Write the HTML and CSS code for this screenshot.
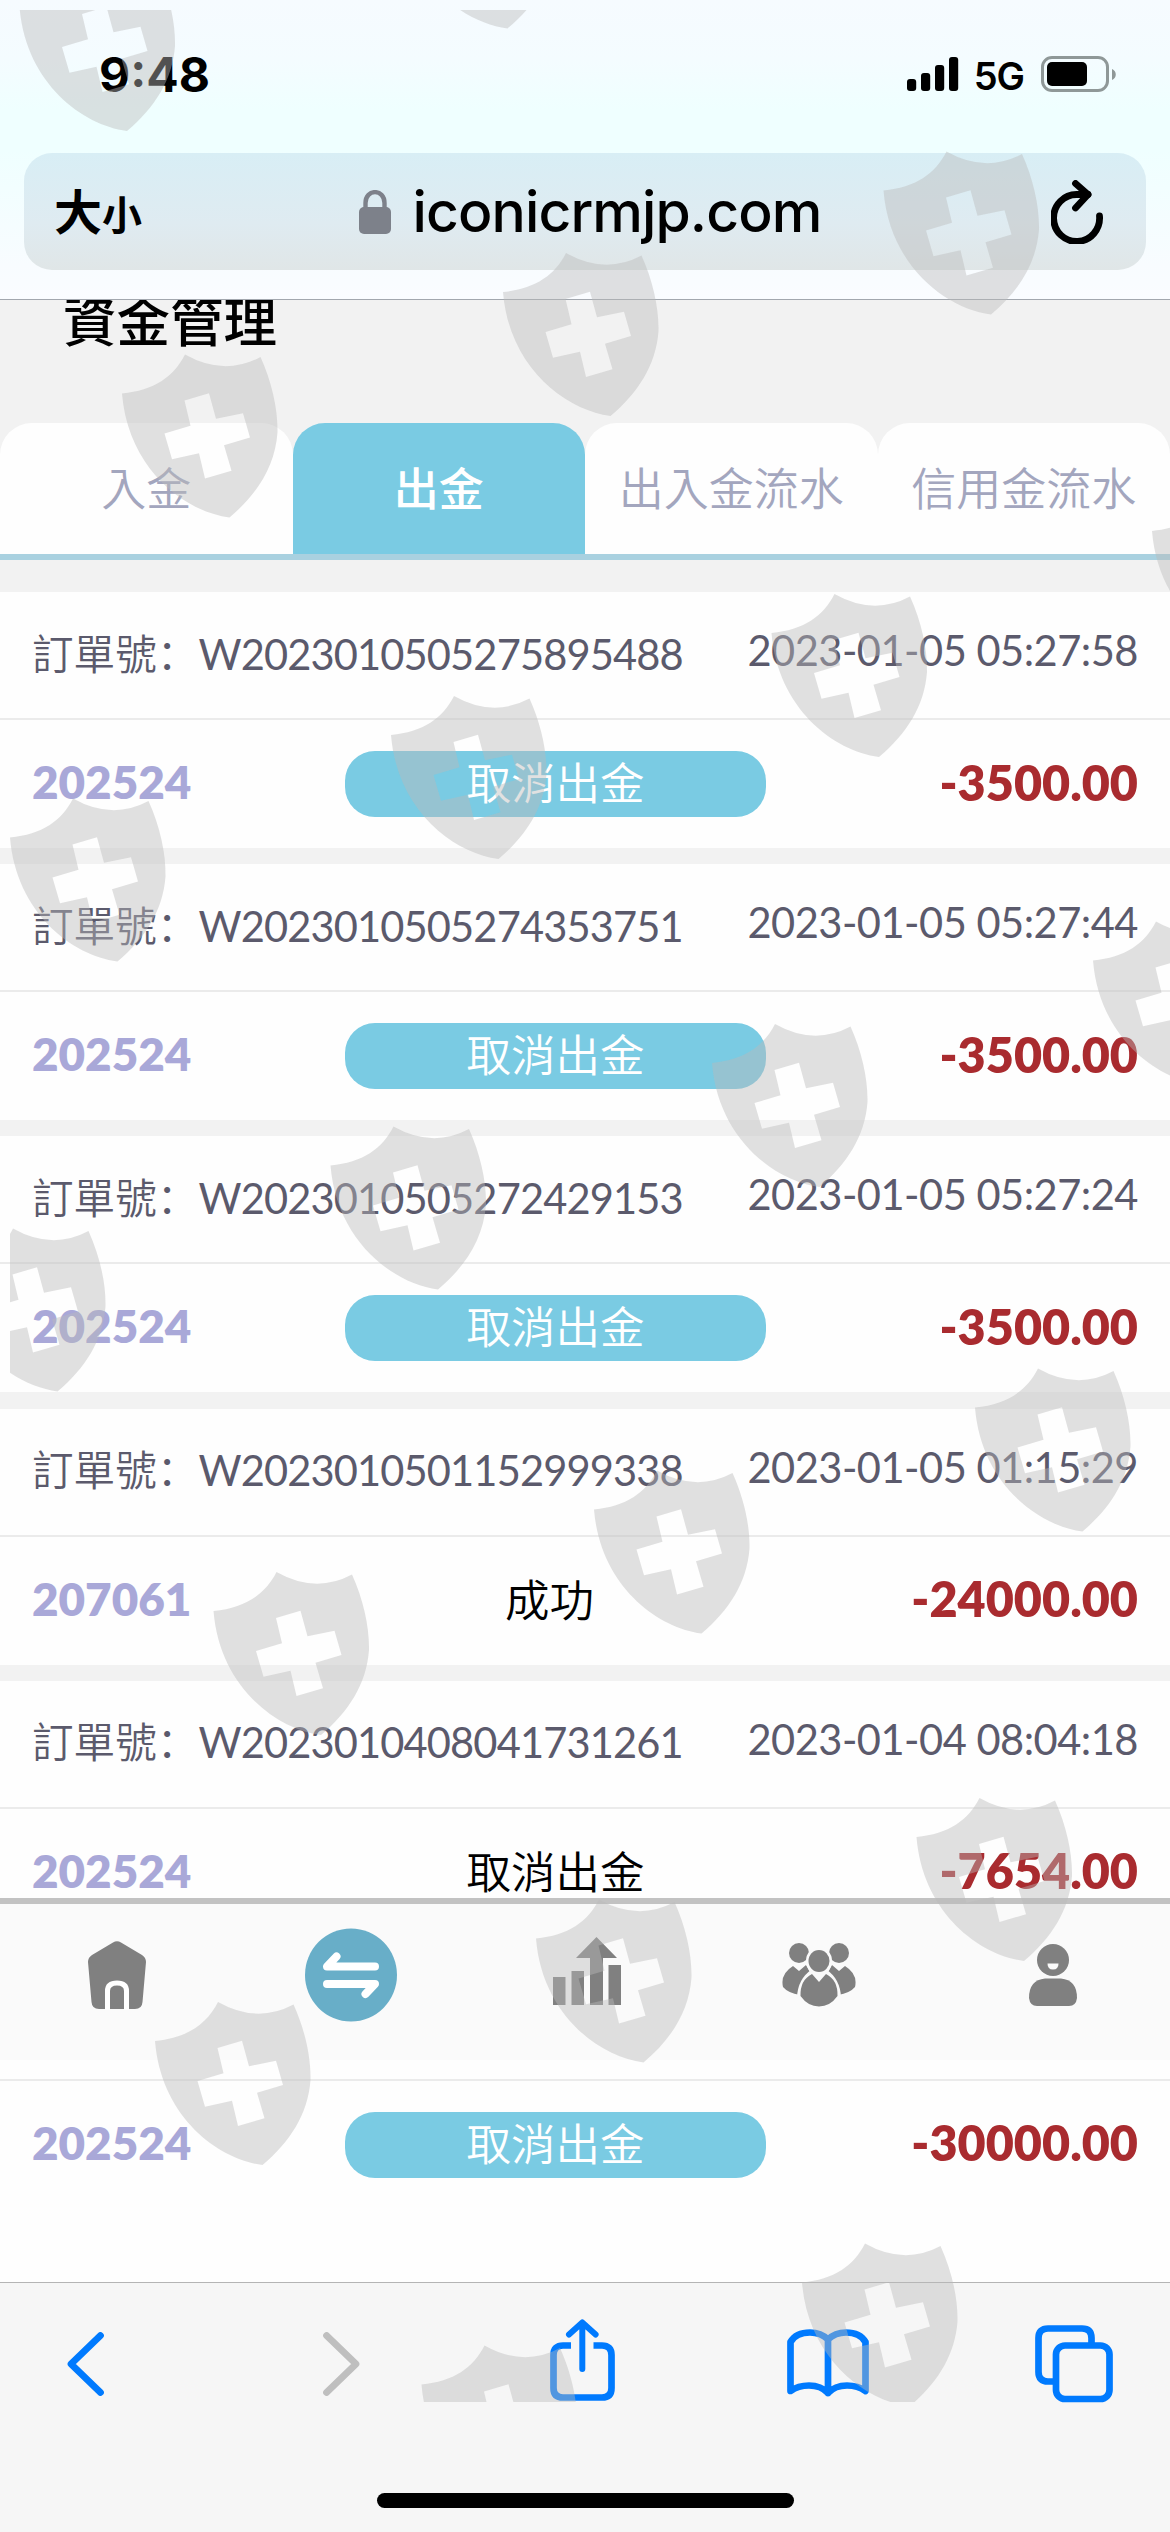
FILE: index.html
```html
<!DOCTYPE html>
<html lang="zh-Hant">
<head>
    <meta charset="UTF-8">
    <title>資金管理</title>
    <link rel="stylesheet" href="styles.css">
</head>
<body>
    <div class="phone">
        <!-- Status bar and address bar -->
        <header class="browser-top">
            <div class="status-bar">
                <span class="time">9:48</span>
                <div class="status-icons">
                    <svg class="signal" viewBox="0 0 52 34">
                        <rect x="0" y="22" width="9.2" height="12" rx="3"/>
                        <rect x="14" y="16" width="9.2" height="18" rx="3"/>
                        <rect x="28" y="8" width="9.2" height="26" rx="3"/>
                        <rect x="42" y="0" width="9.2" height="34" rx="3"/>
                    </svg>
                    <span class="network">5G</span>
                    <svg class="battery" viewBox="0 0 76 36">
                        <rect x="1.5" y="1.5" width="65" height="33" rx="9.5" fill="none" stroke="#8f9898" stroke-width="3"/>
                        <rect x="6" y="6" width="40" height="24" rx="5"/>
                        <path d="M71 13 C76 15 76 22 71 24 Z" fill="#8f9898"/>
                    </svg>
                </div>
            </div>
            <div class="address-bar">
                <div class="text-size"><span class="big">大</span><span class="small">小</span></div>
                <div class="address">
                    <svg class="lock" viewBox="0 0 32 44">
                        <path d="M6.5 20 V13 C6.5 -1.5 25.5 -1.5 25.5 13 V20" fill="none" stroke="#7d818a" stroke-width="4.4"/>
                        <rect x="0" y="17" width="32" height="27" rx="5" fill="#7d818a"/>
                    </svg>
                    <span class="url">iconicrmjp.com</span>
                </div>
                <svg class="reload" viewBox="0 0 52 64">
                    <path d="M37 14.5 H26 A23 23.5 0 1 0 48.5 36" />
                    <path d="M24.5 3.500 L37 14.5 L24.5 28" />
                </svg>
            </div>
        </header>

        <!-- Page content -->
        <main class="page">
            <h1 class="title">資金管理</h1>

            <div class="tabs">
                <div class="tab">入金</div>
                <div class="tab active">出金</div>
                <div class="tab">出入金流水</div>
                <div class="tab">信用金流水</div>
            </div>

            <div class="orders">
                <div class="order">
                    <div class="order-top">
                        <span class="order-no"><span class="label">訂單號<span class="colon" lang="zh-Hans">：</span></span>W2023010505275895488</span>
                        <span class="date">2023-01-05 05:27:58</span>
                    </div>
                    <div class="order-bottom">
                        <span class="account">202524</span>
                        <span class="state cancel">取消出金</span>
                        <span class="amount">-3500.00</span>
                    </div>
                </div>
                <div class="order">
                    <div class="order-top">
                        <span class="order-no"><span class="label">訂單號<span class="colon" lang="zh-Hans">：</span></span>W2023010505274353751</span>
                        <span class="date">2023-01-05 05:27:44</span>
                    </div>
                    <div class="order-bottom">
                        <span class="account">202524</span>
                        <span class="state cancel">取消出金</span>
                        <span class="amount">-3500.00</span>
                    </div>
                </div>
                <div class="order">
                    <div class="order-top">
                        <span class="order-no"><span class="label">訂單號<span class="colon" lang="zh-Hans">：</span></span>W2023010505272429153</span>
                        <span class="date">2023-01-05 05:27:24</span>
                    </div>
                    <div class="order-bottom">
                        <span class="account">202524</span>
                        <span class="state cancel">取消出金</span>
                        <span class="amount">-3500.00</span>
                    </div>
                </div>
                <div class="order">
                    <div class="order-top">
                        <span class="order-no"><span class="label">訂單號<span class="colon" lang="zh-Hans">：</span></span>W2023010501152999338</span>
                        <span class="date">2023-01-05 01:15:29</span>
                    </div>
                    <div class="order-bottom">
                        <span class="account">207061</span>
                        <span class="state success">成功</span>
                        <span class="amount">-24000.00</span>
                    </div>
                </div>
                <div class="order">
                    <div class="order-top">
                        <span class="order-no"><span class="label">訂單號<span class="colon" lang="zh-Hans">：</span></span>W2023010408041731261</span>
                        <span class="date">2023-01-04 08:04:18</span>
                    </div>
                    <div class="order-bottom">
                        <span class="account">202524</span>
                        <span class="state">取消出金</span>
                        <span class="amount">-7654.00</span>
                    </div>
                </div>
                <div class="order last">
                    <div class="order-top"></div>
                    <div class="order-bottom">
                        <span class="account">202524</span>
                        <span class="state cancel">取消出金</span>
                        <span class="amount">-30000.00</span>
                    </div>
                </div>
            </div>

            <!-- Site menu, floats over the list -->
            <nav class="site-nav">
                <div class="nav-item">
                    <svg width="60" height="70" viewBox="0 0 60 70">
                        <path d="M26 2.5 Q30 0 34 2.5 L55 15 Q59 17.500 59 22 L55.500 62 Q55 69 48 69 H12 Q5 69 4.500 62 L1 22 Q1 17.500 5 15 Z"/>
                        <path class="cut" d="M20.500 70 V51 Q20.500 43 30 43 Q39.500 43 39.500 51 V70"/>
                    </svg>
                </div>
                <div class="nav-item">
                    <svg width="92" height="94" viewBox="0 0 92 94">
                        <ellipse cx="46" cy="47" rx="46" ry="46.500" fill="#68aec8"/>
                        <path d="M70 38.500 H22 L31.500 28.500 M22 56 H70 L60.500 66" fill="none" stroke="#fff" stroke-width="8" stroke-linecap="round" stroke-linejoin="round"/>
                    </svg>
                </div>
                <div class="nav-item">
                    <svg class="chart" width="69" height="68" viewBox="0 0 69 68">
                        <path d="M0 40 H12.500 V68 H0 Z M18.500 34 H31 V68 H18.500 Z M55.500 28 H68 V68 H55.500 Z M37 68 V21 H23 L43.500 0 L64 21 H50 V68 Z"/>
                    </svg>
                </div>
                <div class="nav-item">
                    <svg width="74" height="64" viewBox="0 0 74 64">
                        <ellipse cx="17" cy="10" rx="10" ry="10"/>
                        <ellipse cx="57" cy="10" rx="10" ry="10"/>
                        <path d="M11 23 L17 28 L24 22 L30 33 L18 52 Q6 50 1 44 Q-2 31 11 23 Z"/>
                        <path d="M63 23 L57 28 L50 22 L44 33 L56 52 Q68 50 73 44 Q76 31 63 23 Z"/>
                        <ellipse cx="37" cy="18" rx="13" ry="14" fill="#fafafa"/>
                        <path d="M29 27 Q16 36 15 54 L37 64 L59 54 Q58 36 45 27 Z" fill="#fafafa"/>
                        <ellipse cx="37" cy="18" rx="10.500" ry="11"/>
                        <path d="M30 31 L37 39 L44 31 Q56 37 55.500 53 Q48 63.500 37 63.500 Q26 63.500 18.500 53 Q18 37 30 31 Z"/>
                    </svg>
                </div>
                <div class="nav-item">
                    <svg width="50" height="62" viewBox="0 0 50 62">
                        <ellipse cx="25" cy="16" rx="16" ry="16"/>
                        <path d="M19.500 19.500 H30.500 Q30.500 25.500 25 25.500 Q19.500 25.500 19.500 19.500 Z" fill="#fafafa"/>
                        <path d="M17 34.500 H33 Q49 36 49 54 Q48 62 41 62 H9 Q2 62 1 54 Q1 36 17 34.500 Z"/>
                    </svg>
                </div>
            </nav>
        </main>

        <!-- Browser toolbar -->
        <footer class="toolbar">
            <div class="toolbar-icons">
                <svg class="back" width="37" height="64" viewBox="0 0 37 64"><path d="M33.500 3.500 L4 32 L33.500 60.500"/></svg>
                <svg class="forward" width="37" height="64" viewBox="0 0 37 64"><path d="M3.500 3.500 L33 32 L3.500 60.500"/></svg>
                <svg class="share" width="65" height="82" viewBox="0 0 65 82">
                    <path d="M21 26.500 H13 Q3.500 26.500 3.500 36 V69 Q3.500 78.500 13 78.500 H52 Q61.500 78.500 61.500 69 V36 Q61.500 26.500 52 26.500 H43.500" stroke-linecap="butt"/>
                    <path d="M32.300 50 V4 M19 15.500 L32.300 3.500 L45.600 15.500" stroke-width="6"/>
                </svg>
                <svg class="book" width="82" height="68" viewBox="0 0 82 68">
                    <path d="M41 10.500 Q34 3.500 23 3.500 Q9 3.500 3.500 13 V62 Q11 56.500 22 56.500 Q34 56.500 41 64 Q48 56.500 60 56.500 Q71 56.500 78.500 62 V13 Q73 3.500 59 3.500 Q48 3.500 41 10.500 V64"/>
                </svg>
                <svg class="windows" width="78" height="78" viewBox="0 0 78 78">
                    <path d="M20 56.500 H13 Q3.500 56.500 3.500 47 V13 Q3.500 3.500 13 3.500 H47 Q56.500 3.500 56.500 13 V19"/>
                    <rect x="21" y="20.500" width="53.500" height="53.500" rx="9"/>
                </svg>
            </div>
            <div class="home-indicator"></div>
        </footer>

        <!-- Shield watermark over the whole screen -->
        <svg class="watermark" viewBox="10 10 1160 2392">
            <defs>
                <path id="shield" fill-rule="evenodd" d="M0 39 C32 36 52 22 63 0 Q102 22 138.500 2.500 C150 28 156 55 155.500 78 C153 112 135 140 107.500 163 C62 157 6 114 0 39 Z
                    M62.500 46 L68.500 71.300 L42.500 79 L50 104.700 L77 98.700 L83 124 L109.500 116.300 L102 90.700 L128 83 L121 58.700 L94 64.300 L87 38.700 Z"/>
            </defs>
            <use href="#shield" x="19.500" y="-32"/>
            <use href="#shield" x="400" y="-134.500"/>
            <use href="#shield" x="122" y="354.500"/>
            <use href="#shield" x="503" y="253"/>
            <use href="#shield" x="883.500" y="151.500"/>
            <use href="#shield" x="10" y="798.500"/>
            <use href="#shield" x="391" y="696"/>
            <use href="#shield" x="771.500" y="594"/>
            <use href="#shield" x="1152" y="492"/>
            <use href="#shield" x="-50" y="1228.500"/>
            <use href="#shield" x="330.500" y="1126.500"/>
            <use href="#shield" x="712" y="1024"/>
            <use href="#shield" x="1093" y="921.500"/>
            <use href="#shield" x="213.500" y="1572"/>
            <use href="#shield" x="594" y="1470.500"/>
            <use href="#shield" x="975" y="1368.500"/>
            <use href="#shield" x="155" y="2002"/>
            <use href="#shield" x="536" y="1899.500"/>
            <use href="#shield" x="916.500" y="1798"/>
            <use href="#shield" x="421.500" y="2345.500"/>
            <use href="#shield" x="802" y="2243.500"/>
        </svg>
    </div>
</body>
</html>
```
FILE: styles.css
```css
* {
    box-sizing: border-box;
}

body {
    margin: 0;
    font-family: "Lato", "Noto Sans CJK TC", sans-serif;
    background-color: #f2f2f2;
}

.phone {
    position: relative;
    display: flex;
    flex-direction: column;
    width: 1170px;
    height: 2532px;
    overflow: hidden;
}

/* Status bar and address bar */
.browser-top {
    flex: none;
    height: 300px;
    background: linear-gradient(#f6fbff 0, #f4fcff 60px, #efffff 110px, #efffff 150px, #f8fcff 265px, #fafcff 299px);
    border-bottom: 1px solid #a2a7ae;
    font-family: "Inter", "Noto Sans CJK TC", sans-serif;
}

.status-bar {
    display: flex;
    justify-content: space-between;
    align-items: center;
    height: 153px;
    padding: 0 53px 5px 99px;
}

.time {
    font-size: 48px;
    font-weight: 700;
}

.status-icons {
    display: flex;
    align-items: center;
}

.signal {
    width: 52px;
    height: 34px;
}

.network {
    margin: 3px 17px 0 15px;
    font-size: 38px;
    font-weight: 600;
    letter-spacing: -1px;
}

.battery {
    width: 76px;
    height: 36px;
}

.address-bar {
    display: flex;
    justify-content: space-between;
    align-items: center;
    height: 117px;
    margin: 0 24px;
    padding: 0 43px 0 30px;
    border-radius: 28px;
    background: linear-gradient(#d8eef5, #dfebf1 60%, #e0e6e7);
}

.text-size {
    display: flex;
    align-items: baseline;
    width: 100px;
    padding-top: 5px;
    font-weight: 700;
    line-height: 60px;
}

.text-size .big {
    font-size: 48px;
}

.text-size .small {
    font-size: 40px;
}

.address {
    display: flex;
    align-items: center;
    margin-right: 25px;
}

.lock {
    width: 32px;
    height: 44px;
    margin-right: 22px;
}

.url {
    font-size: 57px;
    font-weight: 500;
    line-height: 70px;
    letter-spacing: -0.9px;
}

.reload {
    width: 52px;
    height: 64px;
    fill: none;
    stroke: #000;
    stroke-width: 6.8;
    stroke-linecap: round;
    stroke-linejoin: round;
}

/* Page content */
.page {
    position: relative;
    flex: none;
    height: 1982px;
    overflow: hidden;
    background-color: #f2f2f2;
}

.title {
    height: 123px;
    margin: 0;
    padding-left: 63px;
    font-size: 53.5px;
    font-weight: 500;
    line-height: 42px;
}

.tabs {
    display: flex;
    border-bottom: 6px solid #a9d1e0;
}

.tab {
    flex: 1;
    height: 131px;
    border-radius: 32px 32px 0 0;
    background-color: #fefefe;
    color: #a3a6be;
    font-size: 45px;
    font-weight: 350;
    line-height: 133px;
    text-align: center;
}

.tab.active {
    background-color: #7acbe3;
    color: #fff;
    font-weight: 500;
}

.orders {
    display: flex;
    flex-direction: column;
    gap: 16.2px;
    padding-top: 32px;
}

.order {
    height: 256px;
    background-color: #fefefe;
}

.order.last {
    height: 340px;
}

.order-top {
    display: flex;
    justify-content: space-between;
    align-items: center;
    height: 128px;
    padding: 0 32px 7px;
    border-bottom: 2px solid #ebebeb;
    color: #5b5a6c;
    font-size: 41.6px;
    font-weight: 400;
}

.order-no {
    letter-spacing: -0.85px;
}

.date {
    padding-bottom: 3px;
    letter-spacing: -0.5px;
}

.label {
    font-weight: 350;
    letter-spacing: 0;
}

.colon {
    font-family: "Noto Sans CJK SC", sans-serif;
}

.order-bottom {
    display: flex;
    align-items: center;
    height: 128px;
    padding: 0 32px;
}

.account {
    width: 313px;
    padding-bottom: 5px;
    color: #a9a8d8;
    font-size: 45.8px;
    font-weight: 800;
}

.state {
    width: 421px;
    height: 66px;
    font-size: 44.5px;
    font-weight: 350;
    line-height: 64px;
    text-align: center;
}

.state.cancel {
    border-radius: 30px;
    background-color: #7acbe3;
    color: #fff;
}

.state.success {
    padding-right: 12px;
}

.amount {
    flex: 1;
    padding-bottom: 5px;
    color: #a92b2f;
    font-size: 48.5px;
    font-weight: 800;
    text-align: right;
}

/* Site menu */
.site-nav {
    position: absolute;
    left: 0;
    bottom: 222px;
    display: flex;
    width: 100%;
    height: 162px;
    border-top: 6px solid #c2c2c2;
    background-color: #fafafa;
}

.nav-item {
    flex: 1;
    display: flex;
    justify-content: center;
    align-items: center;
    height: 142px;
    fill: #808080;
}

.nav-item .cut {
    fill: none;
    stroke: #fff;
    stroke-width: 5;
}

.nav-item .chart {
    margin: 0 0 8px 5px;
}

/* Browser toolbar */
.toolbar {
    display: flex;
    flex-direction: column;
    align-items: center;
    flex: 1;
    border-top: 1px solid #b4b4b4;
    background-color: #f6f6f6;
}

.toolbar-icons {
    display: flex;
    align-items: center;
    width: 100%;
    height: 161px;
    padding-left: 67px;
    fill: none;
    stroke: #007afe;
    stroke-width: 6.7;
    stroke-linecap: round;
    stroke-linejoin: round;
}

.forward {
    margin-left: 219px;
    stroke: #bfbfbf;
}

.share {
    margin: 0 0 8px 190px;
}

.book {
    margin: 0 0 2px 172px;
}

.windows {
    margin-left: 166px;
}

.home-indicator {
    width: 417px;
    height: 15px;
    margin-top: 49px;
    border-radius: 8px;
    background-color: #000;
}

/* Watermark */
.watermark {
    position: absolute;
    left: 10px;
    top: 10px;
    width: 1160px;
    height: 2392px;
    overflow: hidden;
    fill: rgba(185, 185, 185, 0.435);
}
```
